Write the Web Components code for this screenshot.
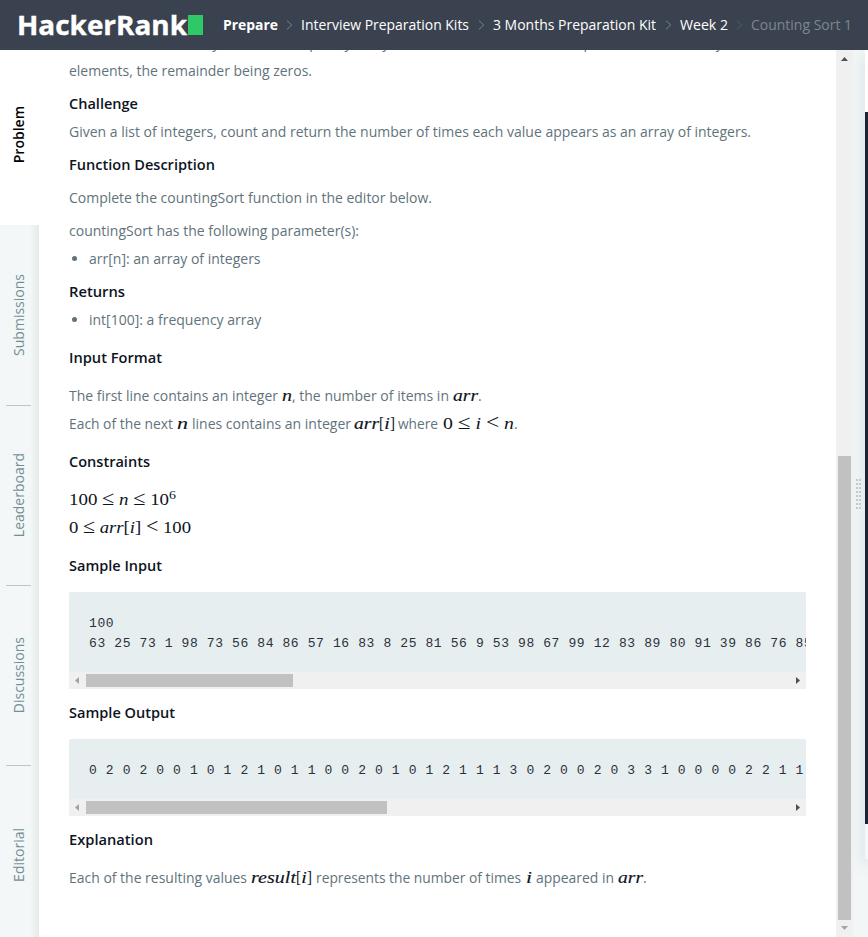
<!DOCTYPE html>
<html lang="en">
<head>
<meta charset="utf-8">
<title>Counting Sort 1</title>
<style>html,body{margin:0;height:100%;overflow:hidden;background:#fff}</style>
</head>
<body>
<challenge-page></challenge-page>
<script>
// Inline text run scaled horizontally to a given width.
class FitText extends HTMLElement {
  connectedCallback() {
    const w = +this.getAttribute('w');
    this.attachShadow({mode:'open'}).innerHTML = `<style>
      :host{display:inline-block;white-space:pre;width:${w}px;flex:none}
      span{display:inline-block;transform-origin:0 50%}</style><span><slot></slot></span>`;
    const s = this.shadowRoot.querySelector('span');
    s.style.transform = `scaleX(${w / s.getBoundingClientRect().width})`;
  }
}

class MathText extends HTMLElement {
  connectedCallback() {
    this.attachShadow({mode:'open'}).innerHTML = `<style>
      :host{display:inline-block;color:#0e141e;font:italic 17px/20px "Liberation Serif",serif;white-space:pre}
      :host([strong]){-webkit-text-stroke:.15px #0e141e}
      ::slotted(b){font-style:normal;font-weight:400}
      </style><slot></slot>`;
  }
}

class SiteHeader extends HTMLElement {
  connectedCallback() {
    const sep = c => `<svg class="${c||''}" width="7" height="10" viewBox="0 0 7 10"><path d="M1 .7 5.8 5 1 9.3" fill="none" stroke="currentColor"/></svg>`;
    this.attachShadow({mode:'open'}).innerHTML = `<style>
      :host{display:flex;align-items:center;height:50px;background:#3b424f;color:#fff;padding-left:17px;box-sizing:border-box;
        font:14px/20px "Open Sans",sans-serif;position:relative;z-index:3}
      .logo{display:flex;align-items:center;width:206px}
      .logo fit-text{font:700 27.5px/38px "Open Sans",sans-serif;-webkit-text-stroke:.4px #fff;margin-top:-1px}
      i{width:15px;height:20px;background:#2ec866;margin-left:1px}
      nav{display:flex;align-items:center}
      svg{color:#66868a;flex:none}
      svg.dim{color:#535d68}
      b{font-weight:700}
      .last{color:#7c868f}
    </style>
    <div class="logo"><fit-text w="170">HackerRank</fit-text><i></i></div>
    <nav><b><fit-text w="55" style="margin-right:8px">Prepare</fit-text></b>${sep()}
    <fit-text w="168" style="margin:0 9px 0 8px">Interview Preparation Kits</fit-text>${sep()}
    <fit-text w="163" style="margin:0 9px 0 8px">3 Months Preparation Kit</fit-text>${sep()}
    <fit-text w="48" style="margin:0 8px">Week 2</fit-text>${sep('dim')}
    <fit-text class="last" w="101" style="margin-left:8px">Counting Sort 1</fit-text></nav>`;
  }
}

class SideTabs extends HTMLElement {
  connectedCallback() {
    this.attachShadow({mode:'open'}).innerHTML = `<style>
      :host{display:flex;flex-direction:column;width:39px;flex:none;font:14px/20px "Open Sans",sans-serif;color:#738f93;
        background:linear-gradient(90deg,#f3f7f7 0 30px,#e4e9e9 39px);overflow:hidden}
      div{height:180px;flex:none;display:flex;align-items:center;justify-content:center;position:relative;box-sizing:border-box;padding-right:2px}
      div.on{height:175px;padding-bottom:5px;background:#fff;color:#000;font-weight:600}
      div:nth-child(n+3)::before{content:"";position:absolute;top:0;left:6px;width:25px;height:1px;background:#b7c9cc}
      span{writing-mode:vertical-rl;transform:rotate(180deg)}
    </style><div class="on"><span>Problem</span></div><div><span>Submissions</span></div><div><span>Leaderboard</span></div><div><span>Discussions</span></div><div><span>Editorial</span></div>`;
    // The <style> node is the first child, so the first divider lands on "Leaderboard".
    this.shadowRoot.querySelector('style').textContent += 'div:nth-child(3)::before{display:none}';
  }
}

class CodeBlock extends HTMLElement {
  connectedCallback() {
    this.attachShadow({mode:'open'}).innerHTML = `<style>
      :host{display:block;width:737px;background:#e7eeef;border-radius:2px 2px 0 0;overflow:hidden}
      pre{margin:0;padding:22px 0 18px 20px;overflow:hidden;white-space:pre;color:#2b313a;font:13px/20px "Liberation Mono",monospace;letter-spacing:.61px}
      footer{height:17px;background:#f0f0f0;display:flex;align-items:center;justify-content:space-between}
      footer i{width:${this.getAttribute('thumb')}px;height:13px;background:#c1c1c1;margin-right:auto}
      svg{width:17px;height:17px}
    </style><pre><slot></slot></pre><footer><svg><path d="M10 5v7L6 8.5z" fill="#a3a3a3"/></svg><i></i><svg><path d="M7 5v7l4-3.5z" fill="#505050"/></svg></footer>`;
  }
}

class ProblemBody extends HTMLElement {
  connectedCallback() {
    this.attachShadow({mode:'open'}).innerHTML = `<style>
      :host{display:block;width:797px;flex:none;box-sizing:border-box;padding-left:30px;margin-top:-21px;font:14px/28px "Open Sans",sans-serif;color:#5f737b}
      p,h3,ul{margin:0;height:28px;white-space:nowrap}
      h3{font-size:14px;font-weight:600;color:#0e141e;margin-top:5px}
      .gap{margin-top:5px}.wide{margin-top:10px}
      .tall{height:56px}
      ul{padding-left:20px}
      h3.ex{margin-top:10px}
      code-block{margin-top:12px}
      big{font-size:20px;line-height:0;font-style:normal}
      b{font-style:normal;font-weight:400}
      small{font-size:12.5px;line-height:0;vertical-align:6px}
    </style>
    <p class="tall">For this exercise, always return a frequency array with 100 elements. The example above shows only the first 4<br><fit-text w="243">elements, the remainder being zeros.</fit-text></p>
    <h3><fit-text w="69">Challenge</fit-text></h3>
    <p><fit-text w="682">Given a list of integers, count and return the number of times each value appears as an array of integers.</fit-text></p>
    <h3><fit-text w="146">Function Description</fit-text></h3>
    <p class="gap"><fit-text w="363">Complete the countingSort function in the editor below.</fit-text></p>
    <p class="gap"><fit-text w="290">countingSort has the following parameter(s):</fit-text></p>
    <ul><li>arr[n]: an array of integers</li></ul>
    <h3><fit-text w="56">Returns</fit-text></h3>
    <ul><li>int[100]: a frequency array</li></ul>
    <h3 class="wide"><fit-text w="93">Input Format</fit-text></h3>
    <p class="wide"><fit-text w="209">The first line contains an integer</fit-text><fit-text w="4"> </fit-text><math-text strong><fit-text w="10">n</fit-text></math-text><fit-text w="157">, the number of items in</fit-text><fit-text w="4"> </fit-text><math-text strong><fit-text w="25">arr</fit-text></math-text>.</p>
    <p><fit-text w="104">Each of the next</fit-text><fit-text w="4"> </fit-text><math-text strong><fit-text w="11">n</fit-text></math-text><fit-text w="4"> </fit-text><fit-text w="159">lines contains an integer</fit-text><fit-text w="3"> </fit-text><math-text strong><fit-text w="25">arr</fit-text></math-text><math-text><b><fit-text w="5">[</fit-text></b><fit-text w="6">i</fit-text><b><fit-text w="5">]</fit-text></b></math-text><fit-text w="3"> </fit-text><fit-text w="40">where</fit-text><fit-text w="5"> </fit-text><math-text><fit-text w="71"><b>0</b> <big>≤</big> i <big>&lt;</big> n</fit-text></math-text>.</p>
    <h3 class="wide"><fit-text w="81">Constraints</fit-text></h3>
    <p class="wide"><math-text><fit-text w="107"><b>100</b> <big>≤</big> n <big>≤</big> <b>10<small>6</small></b></fit-text></math-text></p>
    <p><math-text><fit-text w="122"><b>0</b> <big>≤</big> arr<b>[</b>i<b>]</b> <big>&lt;</big> <b>100</b></fit-text></math-text></p>
    <h3 class="wide"><fit-text w="93">Sample Input</fit-text></h3>
    <code-block thumb="207">100
63 25 73 1 98 73 56 84 86 57 16 83 8 25 81 56 9 53 98 67 99 12 83 89 80 91 39 86 76 85</code-block>
    <h3 class="ex"><fit-text w="106">Sample Output</fit-text></h3>
    <code-block thumb="301">0 2 0 2 0 0 1 0 1 2 1 0 1 1 0 0 2 0 1 0 1 2 1 1 1 3 0 2 0 0 2 0 3 3 1 0 0 0 0 2 2 1 1</code-block>
    <h3 class="ex"><fit-text w="84">Explanation</fit-text></h3>
    <p class="wide"><fit-text w="178">Each of the resulting values</fit-text><fit-text w="4"> </fit-text><math-text strong><fit-text w="45">result</fit-text></math-text><math-text><b><fit-text w="5">[</fit-text></b><fit-text w="6">i</fit-text><b><fit-text w="5">]</fit-text></b></math-text><fit-text w="4"> </fit-text><fit-text w="205">represents the number of times</fit-text><fit-text w="5"> </fit-text><math-text strong><fit-text w="6">i</fit-text></math-text><fit-text w="4"> </fit-text><fit-text w="78">appeared in</fit-text><fit-text w="4"> </fit-text><math-text strong><fit-text w="25">arr</fit-text></math-text>.</p>`;
  }
}

class PageScrollbar extends HTMLElement {
  connectedCallback() {
    this.attachShadow({mode:'open'}).innerHTML = `<style>
      :host{display:flex;flex-direction:column;align-items:center;justify-content:space-between;width:17px;flex:none;background:#f0f0f0}
      i{width:13px;height:464px;background:#c1c1c1;margin-top:auto}
      svg{width:17px;height:17px}
    </style><svg><path d="M5 11h7L8.5 7z" fill="#505050"/></svg><i></i><svg><path d="M5 6h7L8.5 10z" fill="#a3a3a3"/></svg>`;
  }
}

// Drag handle between the panes, with the sliver of the editor pane next to it.
class PaneSplitter extends HTMLElement {
  connectedCallback() {
    this.attachShadow({mode:'open'}).innerHTML = `<style>
      :host{display:flex;width:15px;flex:none;background:#f2f6f7;overflow:hidden}
      .grip{width:12px;display:flex;justify-content:center;padding-top:429px;box-sizing:border-box}
      .ed{width:3px;height:809px;background:linear-gradient(#fff 0 62px,#1c2433 62px 774px,#f3f7f9 774px);box-shadow:0 6px 14px #58707466}
      svg{position:relative;z-index:1}
    </style><div class="grip"><svg width="6" height="30">${Array.from({length:8},(_,r)=>`<path d="M0 ${r*4+1}h2M3 ${r*4+1}h2" stroke="#c6c9ca" stroke-width="2"/>`).join('')}</svg></div><div class="ed"></div>`;
  }
}

class ChallengePage extends HTMLElement {
  connectedCallback() {
    this.attachShadow({mode:'open'}).innerHTML = `<style>
      :host{display:flex;flex-direction:column;width:868px;height:937px;overflow:hidden}
      main{display:flex;height:887px;overflow:hidden}
    </style><site-header></site-header><main><side-tabs></side-tabs><problem-body></problem-body><page-scrollbar></page-scrollbar><pane-splitter></pane-splitter></main>`;
  }
}
customElements.define('fit-text', FitText);
customElements.define('math-text', MathText);
customElements.define('site-header', SiteHeader);
customElements.define('side-tabs', SideTabs);
customElements.define('code-block', CodeBlock);
customElements.define('problem-body', ProblemBody);
customElements.define('page-scrollbar', PageScrollbar);
customElements.define('pane-splitter', PaneSplitter);
customElements.define('challenge-page', ChallengePage);
</script>
</body>
</html>
